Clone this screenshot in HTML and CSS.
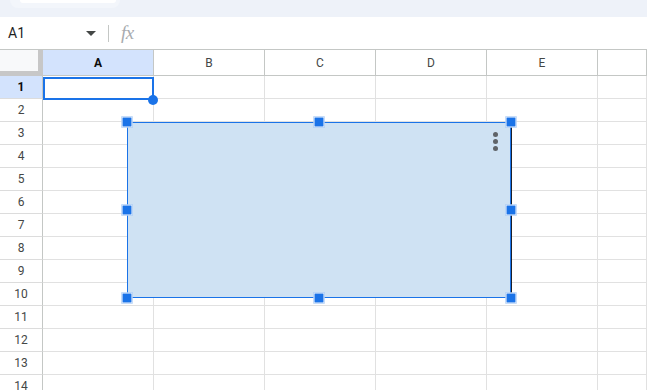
FILE: index.html
```html
<!DOCTYPE html>
<html lang="en">
<head>
    <meta charset="UTF-8">
    <meta name="viewport" content="width=device-width, initial-scale=1.0">
    <title>Sheet</title>
    <link rel="stylesheet" href="styles.css">
</head>
<body>

<div class="top-band">
    <div class="search-tail"><div class="search-tail-inner"></div></div>
</div>

<div class="formula-bar">
    <div class="name-box">
        <span class="name-ref">A1</span>
        <span class="name-caret"></span>
    </div>
    <div class="divider"></div>
    <span class="fx">fx</span>
</div>

<div class="sheet" id="sheet">
    <div class="selection"></div>
    <div class="fill-handle"></div>

    <div class="chart">
        <div class="kebab"><span></span><span></span><span></span></div>
        <div class="handle h-tl"></div>
        <div class="handle h-tc"></div>
        <div class="handle h-tr"></div>
        <div class="handle h-ml"></div>
        <div class="handle h-mr"></div>
        <div class="handle h-bl"></div>
        <div class="handle h-bc"></div>
        <div class="handle h-br"></div>
    </div>
</div>

<script>
    const sheet = document.getElementById("sheet");
    const columns = ["A", "B", "C", "D", "E", ""];
    const rowCount = 14;

    // Header row: corner + column letters
    const corner = document.createElement("div");
    corner.classList.add("corner");
    sheet.appendChild(corner);

    columns.forEach((letter, i) => {
        const head = document.createElement("div");
        head.classList.add("col-head");
        if (i === 0) head.classList.add("active");
        head.textContent = letter;
        sheet.appendChild(head);
    });

    // Data rows
    for (let r = 1; r <= rowCount; r++) {
        const rowHead = document.createElement("div");
        rowHead.classList.add("row-head");
        if (r === 1) rowHead.classList.add("active");
        rowHead.textContent = r;
        sheet.appendChild(rowHead);

        for (let c = 0; c < columns.length; c++) {
            const cell = document.createElement("div");
            cell.classList.add("cell");
            sheet.appendChild(cell);
        }
    }
</script>

</body>
</html>
```

FILE: styles.css
```css
body {
    margin: 0;
    font-family: Roboto, "Liberation Sans", Arial, sans-serif;
    background: #fff;
    overflow: hidden;
    height: 390px;
}

.top-band {
    height: 17px;
    background: #eef2f9;
}

.search-tail {
    margin-left: 10px;
    width: 96px;
    height: 8px;
    background: #f3f6fb;
    border-radius: 0 0 14px 14px;
    padding: 0 4px 0 10px;
}

.search-tail-inner {
    height: 3px;
    background: #fff;
    border-radius: 0 0 10px 10px;
}

.formula-bar {
    height: 32px;
    display: flex;
    align-items: center;
    background: #fff;
}

.name-box {
    width: 100px;
    display: flex;
    align-items: center;
    padding-left: 8px;
    box-sizing: border-box;
}

.name-ref {
    font-size: 14px;
    color: #1f1f1f;
    flex: 1;
}

.name-caret {
    width: 0;
    height: 0;
    border-left: 5px solid transparent;
    border-right: 5px solid transparent;
    border-top: 5px solid #444746;
    margin-right: 4px;
}

.divider {
    width: 1px;
    height: 17px;
    background: #c4c7c5;
    margin-left: 8px;
    margin-right: 12px;
}

.fx {
    font-family: "Liberation Serif", "DejaVu Serif", serif;
    font-style: italic;
    font-size: 19px;
    color: #a8abaf;
    letter-spacing: -0.5px;
}

.sheet {
    position: relative;
    display: grid;
    grid-template-columns: 43px repeat(5, 111px) 1fr;
    grid-template-rows: 26px;
    grid-auto-rows: 23px;
    border-top: 1px solid #c4c7c5;
}

.corner {
    background: #f8f9fa;
    border-right: 5px solid #c7c7c7;
    border-bottom: 5px solid #c7c7c7;
    box-sizing: border-box;
}

.col-head {
    display: flex;
    align-items: center;
    justify-content: center;
    font-size: 12px;
    color: #444746;
    border-right: 1px solid #c4c7c5;
    border-bottom: 1px solid #c4c7c5;
    box-sizing: border-box;
}

.col-head.active,
.row-head.active {
    background: #d3e3fd;
    color: #0b0b0b;
    font-weight: bold;
}

.row-head {
    display: flex;
    align-items: center;
    justify-content: center;
    font-size: 12px;
    color: #444746;
    border-right: 1px solid #c4c7c5;
    border-bottom: 1px solid #dcdcdc;
    box-sizing: border-box;
}

.cell {
    border-right: 1px solid #e1e1e1;
    border-bottom: 1px solid #e1e1e1;
    box-sizing: border-box;
}

.selection {
    position: absolute;
    left: 43px;
    top: 27px;
    width: 111px;
    height: 23px;
    border: 2px solid #1a73e8;
    box-sizing: border-box;
    z-index: 2;
}

.fill-handle {
    position: absolute;
    left: 148px;
    top: 45px;
    width: 10px;
    height: 10px;
    border-radius: 50%;
    background: #1a73e8;
    z-index: 3;
}

.chart {
    position: absolute;
    left: 127px;
    top: 72px;
    width: 384px;
    height: 176px;
    background: #cfe2f3;
    border: 1px solid #1a73e8;
    box-shadow: 1px 0 0 #1b1f2a;
    box-sizing: border-box;
    z-index: 4;
}

.kebab {
    position: absolute;
    top: 9px;
    right: 12px;
    display: flex;
    flex-direction: column;
    gap: 2px;
}

.kebab span {
    width: 5px;
    height: 5px;
    border-radius: 50%;
    background: #5f6368;
}

.handle {
    position: absolute;
    width: 9px;
    height: 9px;
    background: #1a73e8;
    border: 1px solid #fff;
    transform: translate(-50%, -50%);
}

.h-tl { left: -1px; top: -1px; }
.h-tc { left: 50%; top: -1px; }
.h-tr { left: calc(100% + 1px); top: -1px; }
.h-ml { left: -1px; top: 50%; }
.h-mr { left: calc(100% + 1px); top: 50%; }
.h-bl { left: -1px; top: calc(100% + 1px); }
.h-bc { left: 50%; top: calc(100% + 1px); }
.h-br { left: calc(100% + 1px); top: calc(100% + 1px); }
```
